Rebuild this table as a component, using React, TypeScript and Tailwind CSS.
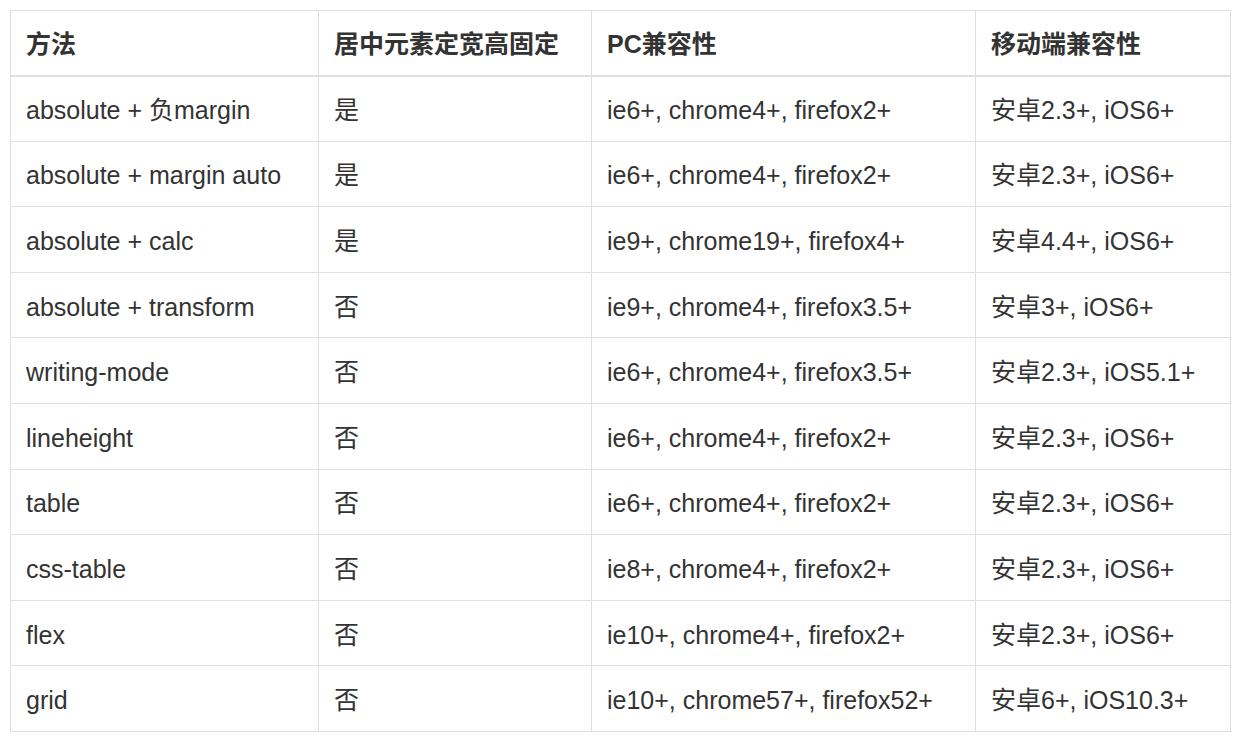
const rows: [string, string, string, string][] = [
  ["absolute + 负margin", "是", "ie6+, chrome4+, firefox2+", "安卓2.3+, iOS6+"],
  ["absolute + margin auto", "是", "ie6+, chrome4+, firefox2+", "安卓2.3+, iOS6+"],
  ["absolute + calc", "是", "ie9+, chrome19+, firefox4+", "安卓4.4+, iOS6+"],
  ["absolute + transform", "否", "ie9+, chrome4+, firefox3.5+", "安卓3+, iOS6+"],
  ["writing-mode", "否", "ie6+, chrome4+, firefox3.5+", "安卓2.3+, iOS5.1+"],
  ["lineheight", "否", "ie6+, chrome4+, firefox2+", "安卓2.3+, iOS6+"],
  ["table", "否", "ie6+, chrome4+, firefox2+", "安卓2.3+, iOS6+"],
  ["css-table", "否", "ie8+, chrome4+, firefox2+", "安卓2.3+, iOS6+"],
  ["flex", "否", "ie10+, chrome4+, firefox2+", "安卓2.3+, iOS6+"],
  ["grid", "否", "ie10+, chrome57+, firefox52+", "安卓6+, iOS10.3+"],
];

const headers = ["方法", "居中元素定宽高固定", "PC兼容性", "移动端兼容性"];

export default function App() {
  return (
    <div
      className="min-h-[749px] bg-white pt-[10px] pl-[10px] text-[#333] text-[25px]"
      style={{ fontFamily: '"Liberation Sans", "Noto Sans CJK SC", sans-serif' }}
    >
      <table className="border-collapse table-fixed w-[1220px]">
        <colgroup>
          <col className="w-[308px]" />
          <col className="w-[273px]" />
          <col className="w-[384px]" />
          <col className="w-[255px]" />
        </colgroup>
        <thead>
          <tr className="h-[65px]">
            {headers.map((h) => (
              <th
                key={h}
                className="border border-[#dfdfdf] border-b-2 px-[15px] pt-[3px] text-left font-bold leading-none"
              >
                {h}
              </th>
            ))}
          </tr>
        </thead>
        <tbody>
          {rows.map((r) => (
            <tr key={r[0]} className="h-[65.6px]">
              {r.map((c, i) => (
                <td key={i} className="border border-[#dfdfdf] px-[15px] pt-[4px] leading-none">
                  {c}
                </td>
              ))}
            </tr>
          ))}
        </tbody>
      </table>
    </div>
  );
}
